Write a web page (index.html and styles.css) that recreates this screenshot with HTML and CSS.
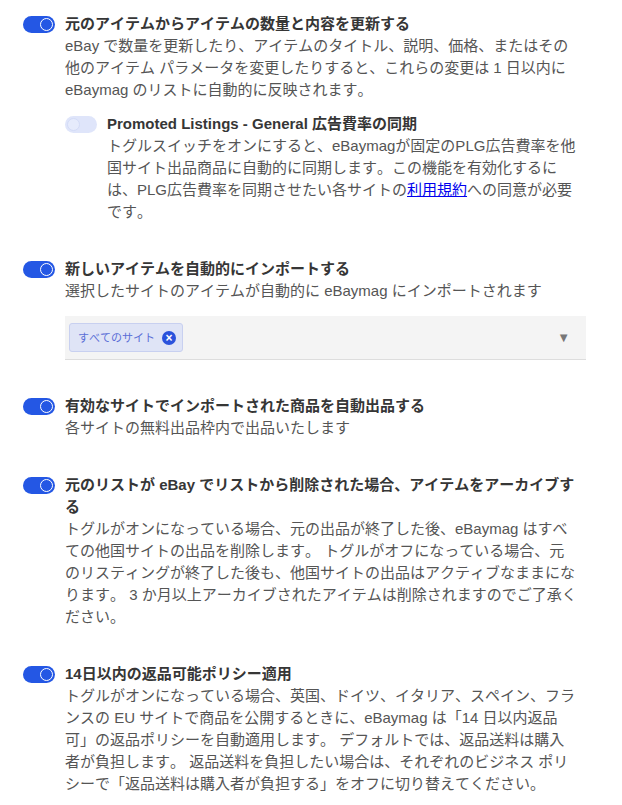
FILE: index.html
```html
<!DOCTYPE html>
<html lang="ja">

<head>
    <meta charset="UTF-8">
    <meta name="viewport" content="width=device-width, initial-scale=1">
    <title>eBaymag 設定</title>
    <link rel="stylesheet" href="styles.css">
</head>

<body>
    <div class="settings">
        <div class="setting">
            <span class="toggle on"></span>
            <div class="setting-body">
                <div class="setting-title">元のアイテムからアイテムの数量と内容を更新する</div>
                <div class="setting-desc">eBay で数量を更新したり、アイテムのタイトル、説明、価格、またはその他のアイテム パラメータを変更したりすると、これらの変更は 1 日以内に eBaymag のリストに自動的に反映されます。</div>

                <div class="setting sub-setting">
                    <span class="toggle"></span>
                    <div class="setting-body">
                        <div class="setting-title">Promoted Listings - General 広告費率の同期</div>
                        <div class="setting-desc">トグルスイッチをオンにすると、eBaymagが固定のPLG広告費率を他国サイト出品商品に自動的に同期します。この機能を有効化するには、PLG広告費率を同期させたい各サイトの<a href="#">利用規約</a>への同意が必要です。</div>
                    </div>
                </div>
            </div>
        </div>

        <div class="setting">
            <span class="toggle on"></span>
            <div class="setting-body">
                <div class="setting-title">新しいアイテムを自動的にインポートする</div>
                <div class="setting-desc">選択したサイトのアイテムが自動的に eBaymag にインポートされます</div>
                <div class="site-select">
                    <span class="tag">すべてのサイト <span class="tag-remove">&times;</span></span>
                    <span class="caret">&#9660;</span>
                </div>
            </div>
        </div>

        <div class="setting">
            <span class="toggle on"></span>
            <div class="setting-body">
                <div class="setting-title">有効なサイトでインポートされた商品を自動出品する</div>
                <div class="setting-desc">各サイトの無料出品枠内で出品いたします</div>
            </div>
        </div>

        <div class="setting">
            <span class="toggle on"></span>
            <div class="setting-body">
                <div class="setting-title">元のリストが eBay でリストから削除された場合、アイテムをアーカイブする</div>
                <div class="setting-desc">トグルがオンになっている場合、元の出品が終了した後、eBaymag はすべての他国サイトの出品を削除します。 トグルがオフになっている場合、元のリスティングが終了した後も、他国サイトの出品はアクティブなままになります。 3 か月以上アーカイブされたアイテムは削除されますのでご了承ください。</div>
            </div>
        </div>

        <div class="setting">
            <span class="toggle on"></span>
            <div class="setting-body">
                <div class="setting-title">14日以内の返品可能ポリシー適用</div>
                <div class="setting-desc">トグルがオンになっている場合、英国、ドイツ、イタリア、スペイン、フランスの EU サイトで商品を公開するときに、eBaymag は「14 日以内返品可」の返品ポリシーを自動適用します。 デフォルトでは、返品送料は購入者が負担します。 返品送料を負担したい場合は、それぞれのビジネス ポリシーで「返品送料は購入者が負担する」をオフに切り替えてください。</div>
            </div>
        </div>
    </div>
</body>

</html>
```

FILE: styles.css
```css
body {
    margin: 0;
    font-family: 'Liberation Sans', 'Noto Sans CJK JP', sans-serif;
    font-size: 15px;
    line-height: 22px;
    color: #555;
    background-color: #fff;
    font-kerning: none;
    text-spacing-trim: space-all;
}

.settings {
    padding: 13px 0 0 23px;
    width: 554px;
}

.setting {
    display: flex;
    gap: 10px;
    margin-bottom: 35px;
}

.setting-body {
    flex: 1;
    min-width: 0;
}

.setting-title {
    font-weight: bold;
    color: #363636;
}

.sub-setting {
    margin-top: 12px;
    margin-bottom: 0;
}

.setting-desc a {
    color: #0000ee;
}

/* Toggle switch */
.toggle {
    flex: none;
    position: relative;
    width: 32px;
    height: 17px;
    margin-top: 3px;
    border-radius: 9px;
    background-color: #dfe5fa;
}

.toggle::after {
    content: '';
    position: absolute;
    top: 2px;
    left: 2px;
    width: 13px;
    height: 13px;
    border-radius: 50%;
    background-color: #e6ebfc;
    box-sizing: border-box;
    border: 1px solid #d3dbf7;
}

.toggle.on {
    background-color: #2457e4;
}

.toggle.on::after {
    left: auto;
    right: 2px;
    background-color: #2457e4;
    border: 1.5px solid #fff;
}

/* Site selector */
.site-select {
    display: flex;
    align-items: center;
    justify-content: space-between;
    height: 43px;
    margin-top: 14px;
    margin-right: -9px;
    padding: 0 16px 0 4px;
    background-color: #f4f4f4;
    border-bottom: 1px solid #ddd;
}

.tag {
    display: flex;
    align-items: center;
    gap: 7px;
    height: 27px;
    padding: 0 6px 0 8px;
    font-size: 11px;
    color: #5b6fd6;
    background-color: #dfe4f6;
    border: 1px solid #c8d0f0;
    border-radius: 3px;
}

.tag-remove {
    display: flex;
    align-items: center;
    justify-content: center;
    width: 14px;
    height: 14px;
    border-radius: 50%;
    background-color: #2a52dc;
    color: #fff;
    font-size: 12px;
    font-weight: bold;
    line-height: 1;
}

.caret {
    font-size: 13px;
    color: #777;
}
```
